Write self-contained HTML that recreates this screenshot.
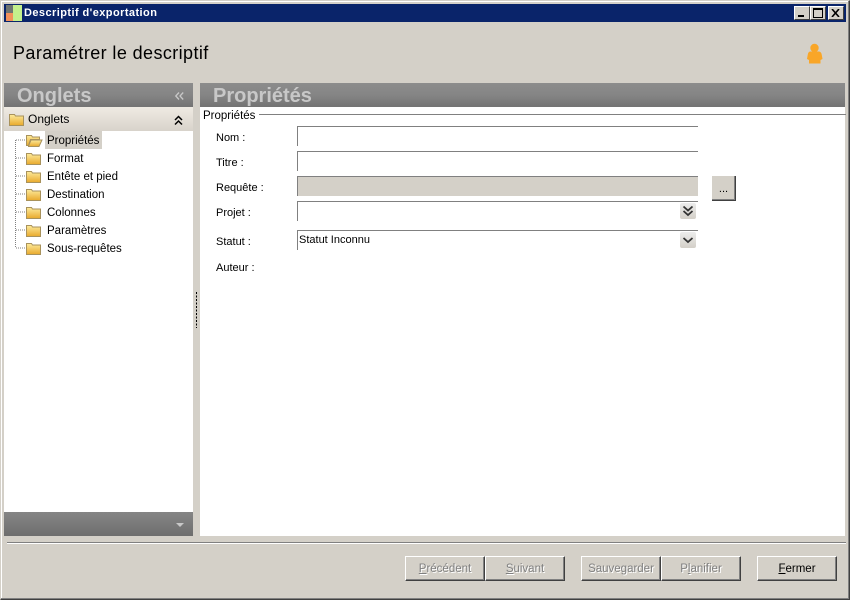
<!DOCTYPE html>
<html lang="fr"><head><meta charset="utf-8"><title>Descriptif d'exportation</title>
<style>
html,body{margin:0;padding:0;background:#d4d0c8;}
#w{position:relative;width:850px;height:600px;overflow:hidden;background:#d4d0c8;font-family:"Liberation Sans",sans-serif;font-size:11px;color:#000;}
#w div,#w svg{position:absolute;}
.t{white-space:nowrap;line-height:13px;}
.head{background:linear-gradient(#8c8c8c,#858585 50%,#737373);height:24px;top:83px;}
.h{font-weight:bold;font-size:20px;color:#c8c8c8;line-height:24px;white-space:nowrap;}
.f{left:297px;width:400px;height:19px;border-top:1px solid #808080;border-left:1px solid #808080;box-sizing:content-box;}
.btn{top:556px;height:25px;box-sizing:border-box;background:#d4d0c8;border:1px solid;border-color:#fff #404040 #404040 #fff;box-shadow:inset -1px -1px 0 #808080;text-align:center;line-height:24px;font-size:11.5px;white-space:nowrap;}
.dis{color:#808080;text-shadow:1px 1px 0 #fff;}
.lab{left:216px;}
.tree{left:47px;font-size:11.5px;}
.wb{top:6px;width:16px;height:14px;box-sizing:border-box;background:#d4d0c8;border:1px solid;border-color:#fff #404040 #404040 #fff;}
</style></head><body>
<div id="w">
<!-- window frame -->
<div style="left:0;top:0;width:850px;height:600px;box-sizing:border-box;border:1px solid;border-color:#d4d0c8 #404040 #404040 #d4d0c8;"></div>
<div style="left:1px;top:1px;width:848px;height:1px;background:#fff;"></div>
<div style="left:1px;top:1px;width:1px;height:598px;background:#fff;"></div>
<div style="left:848px;top:1px;width:1px;height:598px;background:#808080;"></div>
<div style="left:1px;top:598px;width:848px;height:1px;background:#808080;"></div>
<!-- title bar -->
<div style="left:4px;top:4px;width:842px;height:18px;background:#0a246a;"></div>
<div style="left:6px;top:5px;width:7px;height:8px;background:#6f7470;"></div>
<div style="left:6px;top:13px;width:7px;height:8px;background:#f2905a;"></div>
<div style="left:13px;top:5px;width:9px;height:16px;background:#c4f08c;"></div>
<div class="t" style="left:24px;top:7px;color:#fff;font-weight:bold;font-size:11px;letter-spacing:.43px;">Descriptif d'exportation</div>
<div class="wb" style="left:794px;"><div style="left:3px;top:8px;width:6px;height:2px;background:#000;"></div></div>
<div class="wb" style="left:810px;"><div style="left:2px;top:1px;width:10px;height:10px;box-sizing:border-box;border:1px solid #000;border-top-width:2px;"></div></div>
<div class="wb" style="left:828px;"><svg style="left:2px;top:2px;" width="10" height="8" viewBox="0 0 10 8"><path d="M1 0L8 8M8 0L1 8" stroke="#000" stroke-width="1.6"/></svg></div>
<!-- heading -->
<div class="t" style="left:13px;top:43px;font-size:18px;line-height:21px;letter-spacing:.4px;">Paramétrer le descriptif</div>
<svg style="left:806px;top:43px;" width="18" height="22" viewBox="0 0 18 22">
<g fill="#f9a628">
<path d="M4 8.500h9q2.500.5 2.800 3.500l.7 4-2 1v3.500H3v-3.500l-2-1 .7-4q.3-3 2.300-3.500z"/>
<circle cx="8.500" cy="5" r="4.200"/></g></svg>
<!-- left panel -->
<div class="head" style="left:4px;width:189px;"></div>
<div class="h" style="left:17px;top:84px;">Onglets</div>
<svg style="left:175px;top:92px;" width="9" height="8" viewBox="0 0 9 8"><path d="M4 .5L.8 4 4 7.500M8.200.5L5 4l3.200 3.500" fill="none" stroke="#c8c8c8" stroke-width="1.300"/></svg>
<div style="left:4px;top:107px;width:189px;height:24px;background:linear-gradient(#efebe3,#d8d3cb);"></div>
<svg style="left:0;top:0;" width="0" height="0"><defs><linearGradient id="g" x1="0" y1="0" x2="0" y2="1"><stop offset="0" stop-color="#fdeb9c"/><stop offset="1" stop-color="#e8a92c"/></linearGradient></defs></svg>
<svg style="left:9px;top:112px;" width="15" height="14" viewBox="0 0 15 14"><path d="M.5 2.500h5l1 1.500h8v9.500H.5z" fill="url(#g)" stroke="#a8925c"/></svg>
<div class="t" style="left:28px;top:113px;font-size:12px;">Onglets</div>
<svg style="left:174px;top:115px;" width="9" height="11" viewBox="0 0 9 11"><path d="M1 5l3.500-3.500L8 5M1 9.500L4.500 6 8 9.500" fill="none" stroke="#000" stroke-width="1.500"/></svg>
<div style="left:4px;top:131px;width:189px;height:381px;background:#fff;"></div>
<div style="left:4px;top:512px;width:189px;height:24px;background:linear-gradient(#858585,#7a7a7a 50%,#6e6e6e);"></div>
<svg style="left:175px;top:522px;" width="10" height="6" viewBox="0 0 10 6"><path d="M1 1h8L5 5z" fill="#c8c8c8"/></svg>
<!-- tree -->
<svg style="left:4px;top:131px;" width="189" height="130" viewBox="0 0 189 130">
<path d="M11.500 9V117M12 9h10M12 27h10M12 45h10M12 63h10M12 81h10M12 99h10M12 117h10" fill="none" stroke="#808080" stroke-dasharray="1 1"/>
<g stroke="#a8925c" fill="url(#g)">
<path d="M22.500 14.500v-10h5l1 1.500h7v2.500h-9l-2 6h-2z"/><path d="M24.500 15l2.500-6h11l-3 6.500H24.500z"/>
<path d="M22.500 22.500h5l1 1.500h8v9.500h-14z"/><path d="M22.500 40.500h5l1 1.500h8v9.500h-14z"/><path d="M22.500 58.500h5l1 1.500h8v9.500h-14z"/><path d="M22.500 76.500h5l1 1.500h8v9.500h-14z"/><path d="M22.500 94.500h5l1 1.500h8v9.500h-14z"/><path d="M22.500 112.500h5l1 1.500h8v9.500h-14z"/>
</g></svg>
<div style="left:45px;top:131px;width:57px;height:18px;background:#d4d0c8;"></div>
<div class="t tree" style="top:135px;">Propriétés</div>
<div class="t tree" style="top:153px;">Format</div>
<div class="t tree" style="top:171px;">Entête et pied</div>
<div class="t tree" style="top:189px;">Destination</div>
<div class="t tree" style="top:207px;">Colonnes</div>
<div class="t tree" style="top:225px;">Paramètres</div>
<div class="t tree" style="top:243px;">Sous-requêtes</div>
<!-- splitter grip -->
<svg style="left:195px;top:292px;" width="4" height="36" viewBox="0 0 4 36"><path d="M1.500 0v36" stroke="#000" stroke-dasharray="2 1.500" fill="none"/></svg>
<!-- right panel -->
<div class="head" style="left:200px;width:645px;"></div>
<div class="h" style="left:213px;top:84px;">Propriétés</div>
<div style="left:200px;top:107px;width:645px;height:429px;background:#fff;"></div>
<div style="left:259px;top:114px;width:587px;height:1px;background:#808080;"></div>
<div class="t" style="left:203px;top:110px;font-size:11.500px;">Propriétés</div>
<div class="t lab" style="top:132px;">Nom :</div>
<div class="t lab" style="top:157px;">Titre :</div>
<div class="t lab" style="top:182px;">Requête :</div>
<div class="t lab" style="top:207px;">Projet :</div>
<div class="t lab" style="top:236px;">Statut :</div>
<div class="t lab" style="top:262px;">Auteur :</div>
<div class="f" style="top:126px;"></div>
<div class="f" style="top:151px;"></div>
<div class="f" style="top:176px;background:#d4d0c8;"></div>
<div class="f" style="top:201px;"></div>
<div class="f" style="top:230px;"></div>
<div class="t" style="left:299px;top:234px;font-size:11px;">Statut Inconnu</div>
<div style="left:712px;top:176px;width:24px;height:25px;box-sizing:border-box;background:#d4d0c8;border-right:1px solid #404040;border-bottom:1px solid #404040;box-shadow:inset -1px -1px 0 #808080;text-align:center;line-height:27px;font-size:11px;">...</div>
<div style="left:680px;top:203px;width:16px;height:16px;background:linear-gradient(#ececec,#d4d0c8);border-radius:2px;"></div>
<svg style="left:680px;top:203px;" width="16" height="16" viewBox="0 0 16 16"><path d="M3.500 3.500L8 7.500l4.500-4M3.500 8L8 12l4.500-4" fill="none" stroke="#333" stroke-width="1.800"/></svg>
<div style="left:680px;top:232px;width:16px;height:16px;background:linear-gradient(#ececec,#d4d0c8);border-radius:2px;"></div>
<svg style="left:680px;top:232px;" width="16" height="16" viewBox="0 0 16 16"><path d="M3.500 6L8 10l4.500-4" fill="none" stroke="#333" stroke-width="1.800"/></svg>
<!-- footer -->
<div style="left:7px;top:542px;width:839px;height:1px;background:#808080;"></div>
<div style="left:7px;top:543px;width:839px;height:1px;background:#fff;"></div>
<div class="btn dis" style="left:405px;width:80px;"><u>P</u>récédent</div>
<div class="btn dis" style="left:485px;width:80px;"><u>S</u>uivant</div>
<div class="btn dis" style="left:581px;width:80px;">Sauvegarder</div>
<div class="btn dis" style="left:661px;width:80px;">P<u>l</u>anifier</div>
<div class="btn" style="left:757px;width:80px;"><u>F</u>ermer</div>
</div>
</body></html>
